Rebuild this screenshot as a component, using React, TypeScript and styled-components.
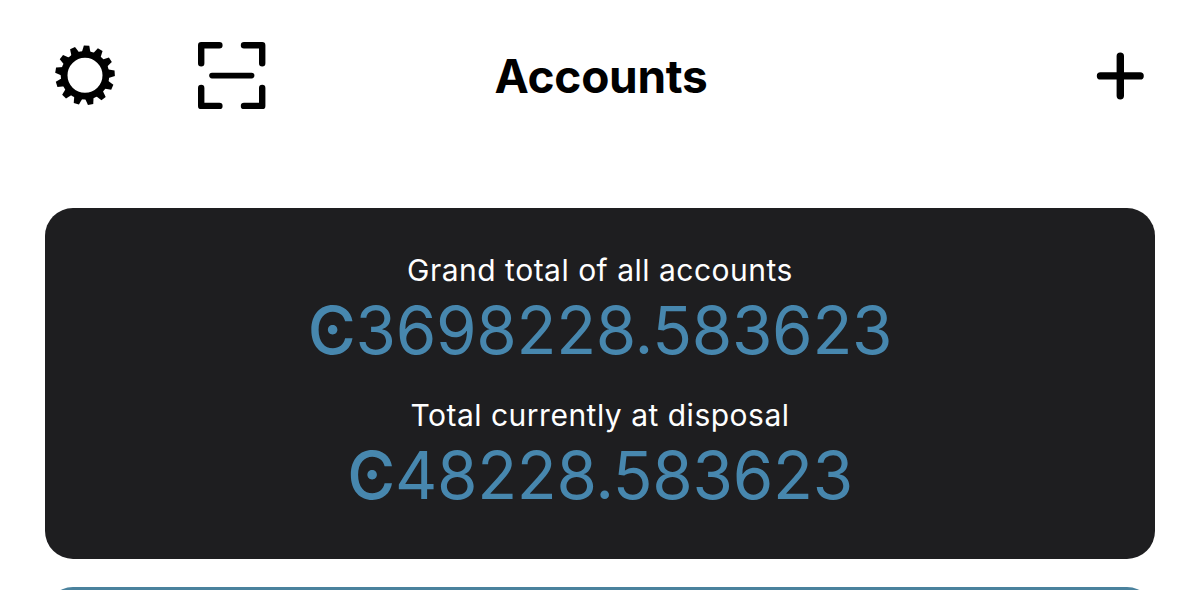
import React from 'react';
import styled, { createGlobalStyle } from 'styled-components';

const GlobalStyle = createGlobalStyle`
  * {
    box-sizing: border-box;
  }

  body {
    margin: 0;
    background: #fff;
    overflow: hidden;
  }
`;

const Screen = styled.div`
  display: flex;
  flex-direction: column;
  height: 590px;
  overflow: hidden;
  font-family: 'Inter', 'Liberation Sans', sans-serif;
  background: #fff;
`;

const Header = styled.header`
  flex: none;
  display: grid;
  grid-template-columns: 1fr auto 1fr;
  align-items: center;
  height: 152px;
  padding: 0 52px 0 52px;
`;

const Actions = styled.div<{ $end?: boolean }>`
  display: flex;
  align-items: center;
  justify-content: ${({ $end }) => ($end ? 'flex-end' : 'flex-start')};
  gap: 76px;
`;

const IconButton = styled.button`
  display: flex;
  padding: 0;
  border: 0;
  background: none;
  color: #000;
`;

const Title = styled.h1`
  margin: 0;
  padding-left: 2px;
  font-size: 46px;
  line-height: 56px;
  font-weight: 700;
  letter-spacing: -0.3px;
  color: #000;
`;

const Cards = styled.main`
  flex: none;
  display: flex;
  flex-direction: column;
  gap: 28px;
  padding: 56px 45px 0;
`;

const TotalsCard = styled.section`
  display: flex;
  flex-direction: column;
  align-items: center;
  gap: 25px;
  height: 351px;
  padding-top: 43px;
  border-radius: 28px;
  background: #1e1e20;
`;

const AccountCard = styled.section`
  height: 240px;
  border-radius: 28px;
  background: #4a829d;
`;

const Total = styled.div`
  display: flex;
  flex-direction: column;
  align-items: center;
  gap: 2px;
`;

const Label = styled.div`
  font-size: 30px;
  line-height: 38px;
  letter-spacing: 0.5px;
  color: #fff;
`;

const Amount = styled.div`
  display: flex;
  align-items: baseline;
  font-size: 65.5px;
  line-height: 80px;
  letter-spacing: -0.3px;
  color: #4787ae;
  white-space: nowrap;
`;

const Currency = styled.span`
  font-weight: 500;
`;

const TEETH = 13;

function GearIcon() {
  return (
    <svg width="66" height="66" viewBox="-33 -32.3 66 66">
      <circle r="20.9" fill="none" stroke="currentColor" strokeWidth="6.8" />
      {Array.from({ length: TEETH }, (_, i) => (
        <path
          key={i}
          d="M-4.4 -22.5L-2.7 -29.8H2.7L4.4 -22.5Z"
          fill="currentColor"
          transform={`rotate(${3 + (i * 360) / TEETH})`}
        />
      ))}
    </svg>
  );
}

function ScanIcon() {
  return (
    <svg
      width="76"
      height="76"
      viewBox="0 0.5 76 76"
      fill="none"
      stroke="currentColor"
      strokeWidth="6.4"
      strokeLinecap="round"
      strokeLinejoin="round"
    >
      <path d="M25.4 7.8H7.2V25.7" />
      <path d="M50 7.8H68.2V25.7" />
      <path d="M25.4 68.4H7.2V50.5" />
      <path d="M50 68.4H68.2V50.5" />
      <path d="M18 38.1H57.6" strokeWidth="5.6" />
    </svg>
  );
}

function PlusIcon() {
  return (
    <svg
      width="56"
      height="56"
      viewBox="0 0 56 56"
      fill="none"
      stroke="currentColor"
      strokeWidth="7.4"
      strokeLinecap="round"
    >
      <path d="M28.3 8.1V47.7M8.5 27.9H48.1" />
    </svg>
  );
}

const totals = [
  { label: 'Grand total of all accounts', amount: '3698228.583623' },
  { label: 'Total currently at disposal', amount: '48228.583623' },
];

export default function App() {
  return (
    <>
      <GlobalStyle />
      <Screen>
        <Header>
          <Actions>
            <IconButton aria-label="Settings">
              <GearIcon />
            </IconButton>
            <IconButton aria-label="Scan">
              <ScanIcon />
            </IconButton>
          </Actions>
          <Title>Accounts</Title>
          <Actions $end>
            <IconButton aria-label="Add account">
              <PlusIcon />
            </IconButton>
          </Actions>
        </Header>
        <Cards>
          <TotalsCard>
            {totals.map(({ label, amount }) => (
              <Total key={label}>
                <Label>{label}</Label>
                <Amount>
                  <Currency>Ͼ</Currency>
                  {amount}
                </Amount>
              </Total>
            ))}
          </TotalsCard>
          <AccountCard />
        </Cards>
      </Screen>
    </>
  );
}
